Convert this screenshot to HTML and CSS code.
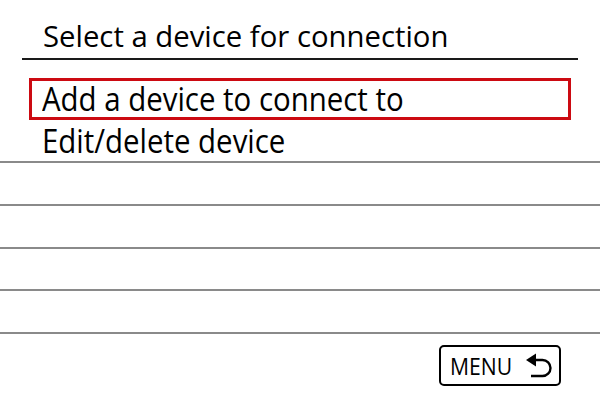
FILE: index.html
```html
<!DOCTYPE html>
<html>
<head>
<meta charset="utf-8">
<link rel="stylesheet" href="styles.css">
</head>
<body>
<div class="screen">
  <div class="header">
    <div class="title">Select a device for connection</div>
  </div>
  <div class="list">
    <div class="row first"><div class="sel"><span class="txt">Add a device to connect to</span></div></div>
    <div class="row second"><div class="label"><span class="txt">Edit/delete device</span></div></div>
    <div class="row empty"></div>
    <div class="row empty"></div>
    <div class="row empty"></div>
    <div class="row empty"></div>
  </div>
  <div class="footer">
    <div class="menu-btn">
      <span class="menu-text">MENU</span>
      <svg class="ret" width="30" height="26" viewBox="0 0 30 26">
        <polygon points="2,7 12,0.5 12,13.5" fill="#000"/>
        <path d="M11 7 H18.5 A8 8 0 0 1 18.5 23 H7" fill="none" stroke="#000" stroke-width="2.4"/>
      </svg>
    </div>
  </div>
</div>
</body>
</html>
```

FILE: styles.css
```css
html, body {
  margin: 0;
  padding: 0;
  background: #fff;
}
.screen {
  width: 600px;
  height: 400px;
  overflow: hidden;
  font-family: "Open Sans", "DejaVu Sans", sans-serif;
  color: #000;
}
.header {
  margin: 0 22px;
  height: 58px;
  border-bottom: 2px solid #1a1a1a;
  display: flex;
  align-items: flex-end;
}
.title {
  padding-left: 21px;
  font-size: 29.3px;
  line-height: 36px;
  padding-bottom: 4px;
}
.list {
  margin-top: 18px;
}
.row {
  box-sizing: border-box;
  height: 42.7px;
  display: flex;
  align-items: center;
}
.txt {
  display: inline-block;
  white-space: nowrap;
  font-size: 32.5px;
  line-height: 36px;
  transform: scaleX(0.905);
  transform-origin: 0 50%;
}
.sel {
  box-sizing: border-box;
  margin: 0 29px;
  width: 542px;
  height: 42px;
  border: 3px solid #cc0a12;
  padding-left: 10px;
  display: flex;
  align-items: center;
}
.label {
  padding-left: 42px;
}
.second, .empty {
  border-bottom: 2px solid #8a8a8a;
}
.footer {
  display: flex;
  justify-content: flex-end;
  padding-right: 39px;
  padding-top: 11px;
}
.menu-btn {
  box-sizing: border-box;
  width: 122px;
  height: 41px;
  border: 2px solid #000;
  border-radius: 5px;
  display: flex;
  align-items: center;
  padding-left: 9px;
}
.menu-text {
  display: inline-block;
  width: 64px;
  font-size: 23.5px;
  line-height: 26px;
  transform: scaleX(0.9);
  transform-origin: 0 50%;
  margin-right: 10px;
}
.ret {
  display: block;
}
```
